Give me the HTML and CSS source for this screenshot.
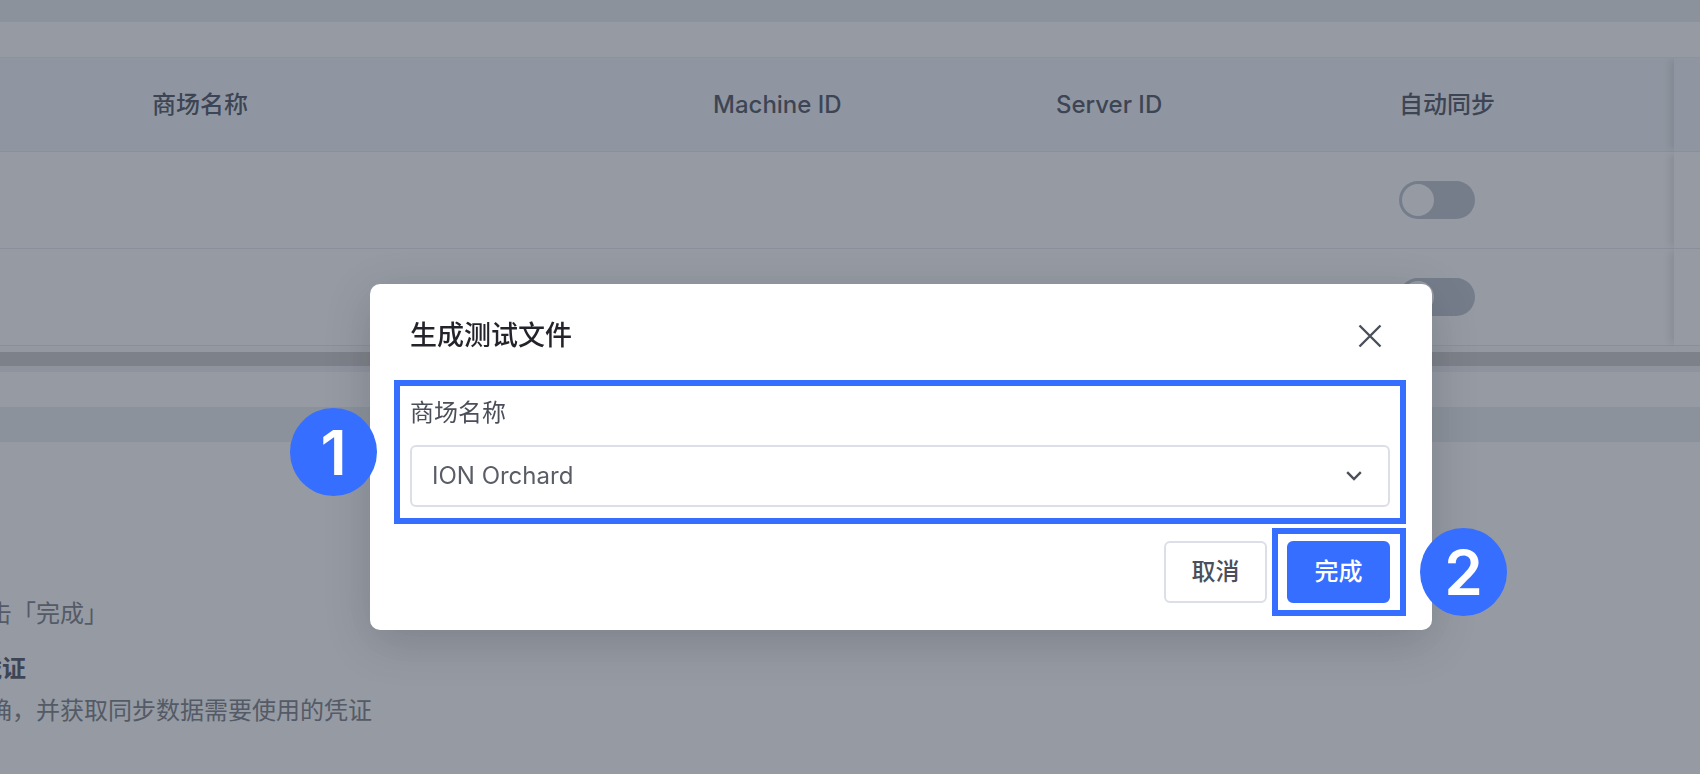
FILE: index.html
```
<!DOCTYPE html>
<html lang="zh-CN">

<head>
  <meta charset="UTF-8">
  <meta name="viewport" content="width=device-width, initial-scale=1.0">
  <title>生成测试文件</title>
  <link rel="stylesheet" href="styles.css">
</head>

<body>
  <main class="page">
    <section class="card">
      <table class="mall-table">
        <colgroup>
          <col class="col-check">
          <col>
          <col class="col-id">
          <col class="col-id">
          <col class="col-sync">
          <col class="col-fixed">
        </colgroup>
        <thead>
          <tr>
            <th></th>
            <th>商场名称</th>
            <th>Machine ID</th>
            <th>Server ID</th>
            <th>自动同步</th>
            <th class="fixed"></th>
          </tr>
        </thead>
        <tbody>
          <tr>
            <td></td>
            <td></td>
            <td></td>
            <td></td>
            <td><input class="switch" type="checkbox" aria-label="自动同步"></td>
            <td class="fixed"></td>
          </tr>
          <tr>
            <td></td>
            <td></td>
            <td></td>
            <td></td>
            <td><input class="switch" type="checkbox" aria-label="自动同步"></td>
            <td class="fixed"></td>
          </tr>
        </tbody>
      </table>
      <div class="scrollbar"></div>
    </section>

    <section class="steps">
      <p>击「完成」</p>
      <h3>凭证</h3>
      <p>确，并获取同步数据需要使用的凭证</p>
    </section>
  </main>

  <div class="mask">
    <div class="modal" role="dialog" aria-modal="true" aria-labelledby="modalTitle">
      <header class="modal-header">
        <h2 id="modalTitle">生成测试文件</h2>
        <button class="close" type="button" aria-label="关闭">
          <svg width="24" height="24" viewBox="0 0 24 24" fill="none" stroke="#4b4f5a" stroke-width="2.4">
            <path d="M1.5 1.5L22.5 22.5M22.5 1.5L1.5 22.5" />
          </svg>
        </button>
      </header>

      <div class="field highlight">
        <span class="badge badge-left">1</span>
        <label for="mall">商场名称</label>
        <div class="select">
          <select id="mall">
            <option>ION Orchard</option>
          </select>
          <svg class="arrow" width="16" height="10" viewBox="0 0 16 10" fill="none" stroke="#4b4f5a" stroke-width="2.4">
            <path d="M1.2 1.2L8 8L14.8 1.2" />
          </svg>
        </div>
      </div>

      <footer class="modal-footer">
        <button class="btn" type="button">取消</button>
        <div class="confirm highlight">
          <button class="btn btn-primary" type="button">完成</button>
          <span class="badge badge-right">2</span>
        </div>
      </footer>
    </div>
  </div>
</body>

</html>
```
FILE: styles.css
```
* {
  box-sizing: border-box;
}

body {
  margin: 0;
  min-height: 100vh;
  overflow: hidden;
  background-color: #ebeff1;
  font-family: Inter, "Noto Sans CJK SC", sans-serif;
  font-size: 24px;
  line-height: 36px;
  color: #4b4f5a;
}

/* page behind the dialog */
.page {
  display: flex;
  flex-direction: column;
  gap: 35px;
  min-height: 100vh;
  padding-top: 22px;
}

.card {
  padding: 35px 0;
  background-color: #fff;
}

.mall-table {
  width: 100%;
  table-layout: fixed;
  border-collapse: separate;
  border-spacing: 0;
  border-top: 1px solid #eeeff2;
}

.col-check {
  width: 129px;
}

.col-id {
  width: 343px;
}

.col-sync {
  width: 298px;
}

.col-fixed {
  width: 26px;
}

.mall-table th,
.mall-table td {
  padding: 0 23px;
  border-bottom: 1px solid #e9ebef;
  text-align: left;
}

.mall-table th {
  height: 94px;
  background-color: #f4f7fa;
  font-weight: 500;
  color: #4f5563;
}

.mall-table td {
  height: 97px;
}

.mall-table .fixed {
  padding: 0;
  box-shadow: -6px 0 10px -2px rgba(0, 0, 0, 0.12);
  clip-path: inset(0 0 0 -16px);
}

.switch {
  appearance: none;
  display: block;
  width: 76px;
  height: 38px;
  margin: 0;
  padding: 3px;
  border-radius: 19px;
  background-color: #bfc5cf;
}

.switch::before {
  content: "";
  display: block;
  width: 32px;
  height: 32px;
  border-radius: 50%;
  background-color: #fff;
}

.scrollbar {
  height: 26px;
  border-top: 6px solid #fafafa;
  border-bottom: 6px solid #f0f1f4;
  background-color: #cfcdcb;
}

.steps {
  flex: 1;
  padding-top: 154px;
  background-color: #fff;
  color: #7d7f85;
  white-space: nowrap;
}

.steps p {
  margin: 0 0 0 -12px;
}

.steps h3 {
  margin: 19px 0 6px -22px;
  font-size: 24px;
  font-weight: 700;
  color: #4f5563;
}

/* dialog */
.mask {
  position: fixed;
  inset: 0;
  display: flex;
  justify-content: center;
  align-items: flex-start;
  padding: 284px 0 0 102px;
  background-color: rgba(43, 53, 71, 0.5);
}

.modal {
  width: 1062px;
  padding: 0 26px 14px 24px;
  border-radius: 10px;
  background-color: #fff;
  box-shadow: 0 12px 48px rgba(0, 0, 0, 0.16);
}

.modal-header {
  display: flex;
  align-items: center;
  justify-content: space-between;
  height: 96px;
  padding: 8px 24px 0 16px;
}

.modal-header h2 {
  margin: 0;
  font-size: 27px;
  font-weight: 500;
  color: #23242b;
}

.close {
  display: flex;
  padding: 0;
  border: 0;
  background: none;
}

.highlight {
  position: relative;
  border: 6px solid #366eff;
}

.field {
  display: flex;
  flex-direction: column;
  gap: 14px;
  padding: 9px 10px 11px;
}

.select {
  position: relative;
}

.select select {
  appearance: none;
  display: block;
  width: 100%;
  height: 62px;
  padding: 0 20px;
  border: 2px solid #dcdfe6;
  border-radius: 6px;
  background-color: #fff;
  font: inherit;
  color: #5a5d66;
}

.arrow {
  position: absolute;
  top: 26px;
  right: 28px;
  pointer-events: none;
}

.modal-footer {
  display: flex;
  align-items: center;
  justify-content: flex-end;
  gap: 5px;
  margin-top: 4px;
}

.confirm {
  padding: 7px 10px 7px 9px;
}

.btn {
  display: block;
  width: 103px;
  height: 62px;
  padding: 0;
  border: 2px solid #dcdfe6;
  border-radius: 6px;
  background-color: #fff;
  font: inherit;
  font-weight: 500;
  color: #4b4f5a;
}

.btn-primary {
  border-color: #366eff;
  background-color: #366eff;
  color: #fff;
}

/* step numbers */
.badge {
  position: absolute;
  width: 87px;
  height: 88px;
  border-radius: 50%;
  background-color: #366eff;
  font-size: 62px;
  font-weight: 600;
  line-height: 90px;
  text-align: center;
  color: #fff;
}

.badge-left {
  top: 22px;
  left: -110px;
}

.badge-right {
  top: -6px;
  right: -107px;
}
```
